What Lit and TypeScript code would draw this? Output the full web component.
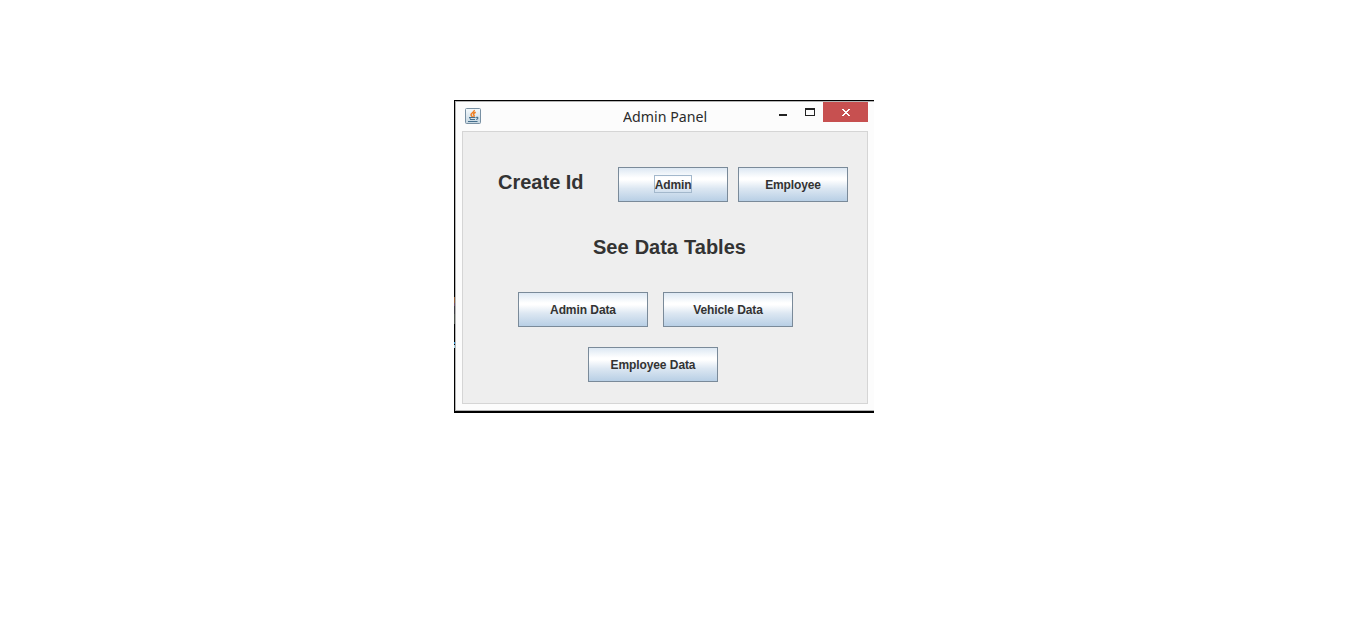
import { LitElement, html, css, svg } from "lit";
import { customElement } from "lit/decorators.js";

@customElement("metal-button")
class MetalButton extends LitElement {
  static properties = { label: {}, focused: { type: Boolean } };
  declare label: string;
  declare focused: boolean;

  static styles = css`
    :host { display: block; height: 35px; }
    button {
      box-sizing: border-box; width: 100%; height: 35px; margin: 0; padding: 0 0 1px;
      display: flex; align-items: center; justify-content: center;
      border: 1px solid #7a8a99; border-radius: 0;
      background: linear-gradient(#dde8f3 0%, #ffffff 30%, #ffffff 36%, #dce7f2 62%, #b8cfe5 100%);
      font: bold 12px/16px "Liberation Sans", Arial, sans-serif; color: #333;
      letter-spacing: -0.12px; word-spacing: 0.3px;
    }
    .label { box-sizing: border-box; height: 18px; white-space: nowrap; border: 1px solid transparent; padding-top: 2px; line-height: 15px; }
    .focus { width: 38px; display: flex; justify-content: center; border-color: #a3b8cc; }
  `;

  render() {
    return html`<button><span class="label ${this.focused ? "focus" : ""}">${this.label}</span></button>`;
  }
}

@customElement("app-root")
class AppRoot extends LitElement {
  static styles = css`
    :host {
      display: block; box-sizing: border-box; width: 1354px; height: 623px;
      padding: 100px 0 0 454px; background: #fff; overflow: hidden;
      font-family: "Liberation Sans", Arial, sans-serif; color: #333;
    }
    .window {
      position: relative; box-sizing: border-box; width: 420px; height: 313px;
      border: solid #000; border-width: 1px 0 2px 1px;
    }
    .frame {
      box-sizing: border-box; height: 310px; background: #fcfcfc;
      border: solid #b4b4b4; border-width: 1px 0 1px 1px; padding-right: 6px;
    }
    .titlebar { display: flex; height: 29px; }
    .java { display: block; margin: 6px 0 0 9px; }
    .title {
      width: 290px; padding-left: 140px; box-sizing: border-box;
      font: 15px/29px "Noto Sans", "Open Sans", sans-serif; color: #2b2b2b; white-space: nowrap;
    }
    .title span { display: inline-block; transform-origin: 0 50%; transform: scaleX(.945); }
    .controls { display: block; margin-left: auto; }
    .panel {
      box-sizing: border-box; width: 406px; height: 273px; margin-left: 6px;
      border: 1px solid #d5d5d5; background: #eee; padding: 35px 0 0 35px;
    }
    .row { display: flex; }
    h2 { margin: 0; font-size: 20px; line-height: 30px; font-weight: bold; white-space: nowrap; }
    .w110 { width: 110px; }
    .w130 { width: 130px; }
    .create { gap: 10px; }
    .create h2 { width: 110px; }
    .tables { margin: 30px 0 30px 95px; word-spacing: 0.5px; }
    .data { gap: 15px; margin-left: 20px; }
    .last { margin: 20px 0 0 90px; }
    .edge { position: absolute; left: -1px; top: 195px; }
  `;

  javaIcon() {
    return svg`<svg class="java" width="18" height="18" viewBox="0 0 18 18">
      <defs><linearGradient id="g" x2="0" y2="1"><stop stop-color="#f5fafd"/><stop offset="1" stop-color="#c5d6e1"/></linearGradient></defs>
      <rect x="0.5" y="0.5" width="15" height="15" rx="1" fill="url(#g)" stroke="#7890a3"/>
      <path d="M9.300 2C9.700 4 6 4.800 6 6.700c0 1 1 1.500 1.500 2.300M10.700 4.300C8.600 5.300 8 6.100 8.800 7.100c.7.800.3 1.400-.3 1.900" fill="none" stroke="#ee7d20" stroke-width="1.500"/>
      <path d="M4 9.500h6.500M5 11.500h5M11 9.500c2.500-.8 2.500 1.300.2 2M3 13.500h9.500M4.800 9.500c.3 1.300.7 2 .9 2" fill="none" stroke="#456f8d" stroke-width="1.100"/>
    </svg>`;
  }

  render() {
    return html`
      <div class="window">
        <div class="frame">
          <div class="titlebar">
            ${this.javaIcon()}
            <div class="title"><span>Admin Panel</span></div>
            <svg class="controls" width="95" height="20" viewBox="0 0 95 20" shape-rendering="crispEdges">
              <rect x="6" y="12" width="8" height="2" fill="#222"/>
              <path fill="#222" fill-rule="evenodd" d="M32 6h10v8H32zM33 8v5h8V8z"/>
              <rect x="50" width="45" height="20" fill="#c75050"/>
              <path fill="#fff" d="M69 7h2v1h1v1h2V8h1V7h2v1h-1v1h-1v1h-1v1h1v1h1v1h1v1h-2v-1h-1v-1h-2v1h-1v1h-2v-1h1v-1h1v-1h1v-1h-1V9h-1V8h-1z"/>
            </svg>
          </div>
          <div class="panel">
            <div class="row create">
              <h2>Create Id</h2>
              <metal-button class="w110" label="Admin" focused></metal-button>
              <metal-button class="w110" label="Employee"></metal-button>
            </div>
            <h2 class="tables">See Data Tables</h2>
            <div class="row data">
              <metal-button class="w130" label="Admin Data"></metal-button>
              <metal-button class="w130" label="Vehicle Data"></metal-button>
            </div>
            <metal-button class="w130 last" label="Employee Data"></metal-button>
          </div>
        </div>
        <svg class="edge" width="1" height="54" viewBox="0 0 1 54" shape-rendering="crispEdges">
          <rect y="1" width="1" height="6" fill="#8a5a35"/>
          <rect y="7" width="1" height="3" fill="#6b4b63"/>
          <rect y="10" width="1" height="8" fill="#3c3c42"/>
          <rect y="18" width="1" height="10" fill="#4b514b"/>
          <rect y="46" width="1" height="2" fill="#3a9fe0"/>
          <rect y="49" width="1" height="3" fill="#a8d4e5"/>
        </svg>
      </div>`;
  }
}
